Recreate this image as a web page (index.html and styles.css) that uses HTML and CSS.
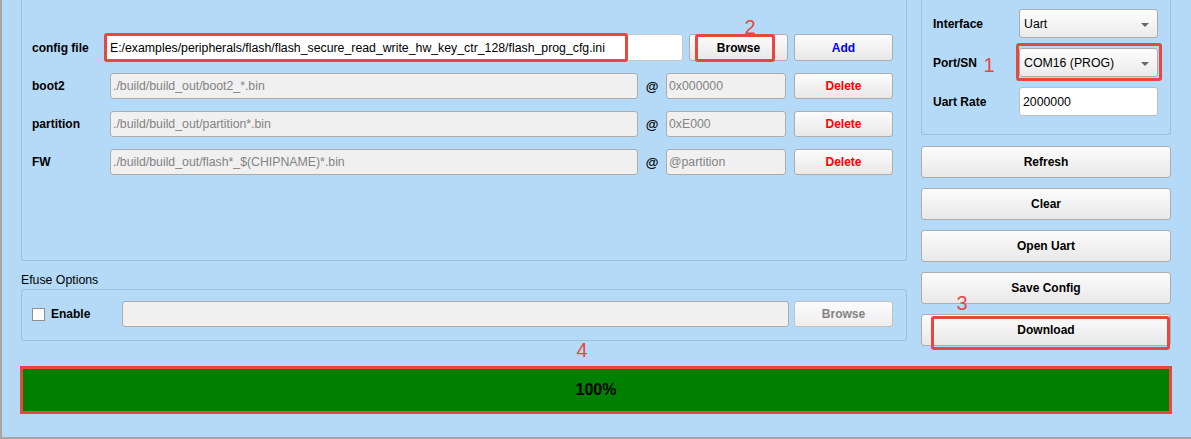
FILE: index.html
```html
<!DOCTYPE html>
<html>
<head>
<meta charset="utf-8">
<link rel="stylesheet" href="styles.css">
</head>
<body>
<div class="window">
  <div class="main">
    <div class="left">
      <div class="group files">
        <div class="row cfg">
          <div class="lbl">config file</div>
          <div class="field cfgfield">E:/examples/peripherals/flash/flash_secure_read_write_hw_key_ctr_128/flash_prog_cfg.ini</div>
          <div class="btn">Browse</div>
          <div class="btn add">Add</div>
        </div>
        <div class="row">
          <div class="lbl">boot2</div>
          <div class="field path">./build/build_out/boot2_*.bin</div>
          <div class="at">@</div>
          <div class="field addr">0x000000</div>
          <div class="btn del">Delete</div>
        </div>
        <div class="row">
          <div class="lbl">partition</div>
          <div class="field path">./build/build_out/partition*.bin</div>
          <div class="at">@</div>
          <div class="field addr">0xE000</div>
          <div class="btn del">Delete</div>
        </div>
        <div class="row">
          <div class="lbl">FW</div>
          <div class="field path">./build/build_out/flash*_$(CHIPNAME)*.bin</div>
          <div class="at">@</div>
          <div class="field addr">@partition</div>
          <div class="btn del">Delete</div>
        </div>
      </div>
      <div class="efuse-title">Efuse Options</div>
      <div class="group efuse">
        <div class="row">
          <div class="check"><span class="box"></span><span class="lbl-b">Enable</span></div>
          <div class="field efield"></div>
          <div class="btn disabled">Browse</div>
        </div>
      </div>
    </div>
    <div class="right">
      <div class="group port">
        <div class="prow"><div class="plbl">Interface</div><div class="sel">Uart</div></div>
        <div class="prow"><div class="plbl">Port/SN</div><div class="sel">COM16 (PROG)</div></div>
        <div class="prow"><div class="plbl">Uart Rate</div><div class="field white">2000000</div></div>
      </div>
      <div class="btns">
        <div class="btn big">Refresh</div>
        <div class="btn big">Clear</div>
        <div class="btn big">Open Uart</div>
        <div class="btn big">Save Config</div>
        <div class="btn big">Download</div>
      </div>
    </div>
  </div>
  <div class="progress">100%</div>

  <div class="mark m1"></div>
  <div class="mark m2"></div>
  <div class="mark m3"></div>
  <div class="mark m4"></div>
  <div class="num n1">1</div>
  <div class="num n2">2</div>
  <div class="num n3">3</div>
  <div class="num n4">4</div>
</div>
</body>
</html>
```
FILE: styles.css
```css
* { box-sizing: border-box; }
body {
  margin: 0;
  font-family: "Liberation Sans", Arial, sans-serif;
  font-size: 12px;
  color: #000;
  background: #b4daf7;
}
.window {
  position: relative;
  width: 1191px;
  height: 439px;
  background: #b4daf7;
  border-left: 2px solid #a6a6a6;
  border-bottom: 2px solid #a6a6a6;
  overflow: hidden;
}
.main {
  display: flex;
  gap: 14px;
  padding-left: 19px;
}
.left { width: 886px; }
.group {
  border: 1px solid #9bc1dd;
  border-top: none;
  border-radius: 0 0 3px 3px;
}
.files {
  height: 261px;
  padding: 34px 12px 0 10px;
  display: flex;
  flex-direction: column;
  gap: 12px;
}
.row {
  display: flex;
  align-items: center;
  height: 26px;
}
.row.cfg { height: 27px; }
.lbl { width: 73px; font-weight: bold; }
.field {
  height: 100%;
  border: 1px solid #acacac;
  border-radius: 3px;
  background: #f0f0f0;
  color: #838383;
  display: flex;
  align-items: center;
  padding-left: 2px;
  white-space: nowrap;
  overflow: hidden;
  font-size: 12.3px;
}
.cfgfield {
  width: 578px;
  background: #fff;
  color: #000;
  padding-left: 4px;
  border-color: #c8c8c8;
}
.path { width: 528px; margin-left: 5px; }
.at { width: 28px; text-align: center; font-weight: bold; font-size: 13px; }
.addr { width: 120px; }
.btn {
  height: 100%;
  width: 99px;
  border: 1px solid #adadad;
  border-radius: 3px;
  background: linear-gradient(#fcfcfc, #e8e8e8);
  font-weight: bold;
  display: flex;
  align-items: center;
  justify-content: center;
  white-space: nowrap;
}
.cfg .btn { margin-left: 6px; }
.addr + .btn { margin-left: 8px; }
.del { color: #f00; }
.add { color: #00f; }

.efuse-title {
  margin-top: 10px;
  height: 18px;
  line-height: 18px;
  font-size: 12.3px;
}
.efuse {
  border-top: 1px solid #9bc1dd;
  border-radius: 3px;
  height: 52px;
  padding: 11px 12px 0 10px;
}
.check {
  width: 90px;
  display: flex;
  align-items: center;
  gap: 6px;
}
.box {
  width: 13px;
  height: 13px;
  background: #fff;
  border: 1px solid #8e8f8f;
}
.lbl-b { font-weight: bold; }
.efield { width: 667px; }
.efuse .btn { margin-left: 5px; }
.btn.disabled {
  color: #838383;
  background: linear-gradient(#fbfbfb, #eeeeee);
  border-color: #c2c2c2;
}

.right { width: 250px; }
.port {
  height: 135px;
  padding: 9px 11px 0 11px;
  display: flex;
  flex-direction: column;
  gap: 10px;
}
.prow {
  display: flex;
  align-items: center;
  height: 29px;
}
.plbl { width: 86px; font-weight: bold; }
.sel {
  position: relative;
  width: 139px;
  height: 100%;
  border: 1px solid #acacac;
  border-radius: 3px;
  background: linear-gradient(#fdfdfd, #ebebeb);
  padding-left: 4px;
  display: flex;
  align-items: center;
  font-size: 12.3px;
}
.sel::after {
  content: "";
  position: absolute;
  right: 8px;
  top: 13px;
  border-left: 4px solid transparent;
  border-right: 4px solid transparent;
  border-top: 4px solid #666;
}
.field.white {
  width: 139px;
  background: #fff;
  color: #000;
  padding-left: 3px;
  border-color: #bdbdbd;
}
.btns {
  margin-top: 11px;
  display: flex;
  flex-direction: column;
  gap: 10px;
}
.btn.big { width: 250px; height: 32px; }

.progress {
  margin: 20px 0 0 18px;
  width: 1152px;
  height: 48px;
  border: 3px solid #e8473e;
  background: #008000;
  display: flex;
  align-items: center;
  justify-content: center;
  font-weight: bold;
  font-size: 16px;
}

.mark {
  position: absolute;
  border: 3px solid #e8473e;
  border-radius: 3px;
}
.m1 { left: 102px; top: 33px; width: 524px; height: 29px; }
.m2 { left: 693px; top: 34px; width: 80px; height: 28px; }
.m3 { left: 1014px; top: 43px; width: 146px; height: 38px; }
.m4 { left: 929px; top: 316px; width: 239px; height: 34px; }
.num {
  position: absolute;
  width: 12px;
  text-align: center;
  color: #e8473e;
  font-size: 20px;
  line-height: 20px;
}
.n1 { left: 981px; top: 55px; }
.n2 { left: 742px; top: 17px; }
.n3 { left: 954px; top: 293px; }
.n4 { left: 574px; top: 340px; }
```
